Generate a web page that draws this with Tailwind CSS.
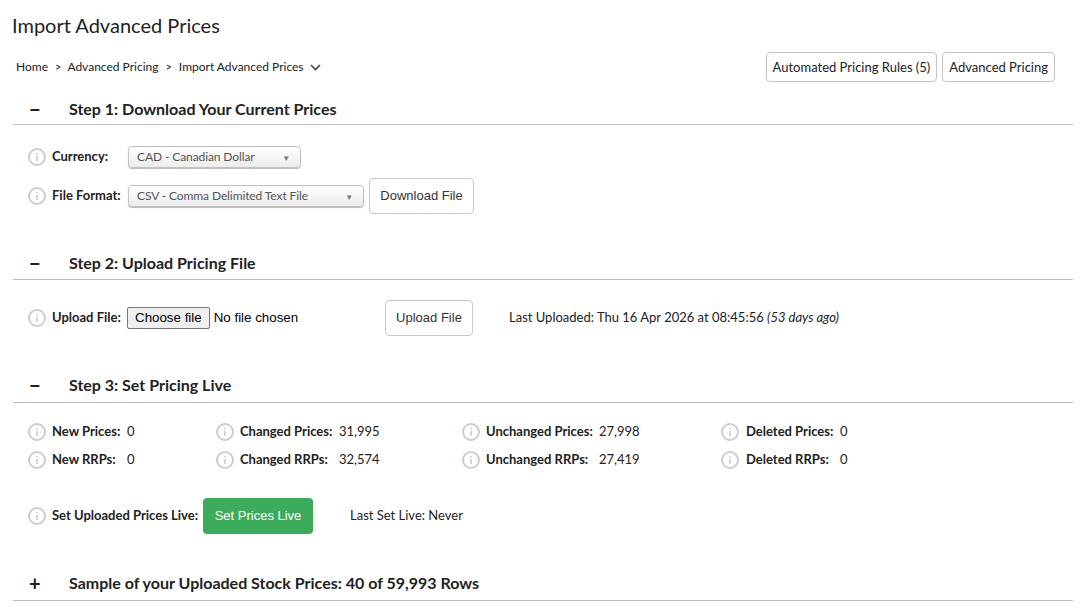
<!DOCTYPE html>
<html lang="en">
<head>
    <meta charset="UTF-8">
    <meta name="viewport" content="width=device-width, initial-scale=1.0">
    <title>Import Advanced Prices</title>
    <script src="https://cdn.jsdelivr.net/npm/@tailwindcss/browser@4"></script>
</head>
<body class="bg-white text-[#222] font-['Lato',sans-serif] text-[13px] overflow-hidden">
<div class="h-[615px] w-[1083px] pl-[13px] pr-[10px] overflow-hidden">

    <h1 class="pt-[12px] -ml-[1px] h-[52px] text-[20px] leading-[26px] text-[#222]">Import Advanced Prices</h1>

    <!-- breadcrumb and top buttons -->
    <div class="flex items-center justify-between h-[30px] pl-[3px] pr-[18px]">
        <div class="flex items-center text-[12px]">
            <span>Home</span>
            <span class="ml-[7px] mr-[6px] text-[11px]">&gt;</span>
            <span>Advanced Pricing</span>
            <span class="ml-[7px] mr-[7px] text-[11px]">&gt;</span>
            <span>Import Advanced Prices</span>
            <svg class="ml-[6px] mt-[1px]" width="11" height="7" viewBox="0 0 11 7" fill="none" stroke="#444" stroke-width="1.6"><path d="M1 1l4.5 4.5L10 1"/></svg>
        </div>
        <div class="flex gap-[5px]">
            <a class="flex items-center h-[30px] pt-[1px] px-[6px] border border-[#c4c4c4] rounded-[4px] text-[13px]">Automated Pricing Rules (5)</a>
            <a class="flex items-center h-[30px] pt-[1px] px-[6px] border border-[#c4c4c4] rounded-[4px] text-[13px]">Advanced Pricing</a>
        </div>
    </div>

    <!-- step 1 -->
    <div class="flex items-center h-[28px] mt-[13px] border-b border-[#bdbdbd] box-content pb-[1px]">
        <span class="w-[56px] pl-[16px] text-[20px] font-bold leading-none">−</span>
        <h2 class="text-[16px] font-bold">Step 1: Download Your Current Prices</h2>
    </div>
    <div class="flex items-center h-[22px] mt-[21px] pl-[15px]">
        <svg class="w-[18px] h-[18px] shrink-0" viewBox="0 0 18 18" fill="none"><circle cx="9" cy="9" r="8" stroke="#c9cdd6" stroke-width="2"/><path d="M9 8v5M9 5v1.4" stroke="#b5b9c2" stroke-width="1.2"/></svg>
        <label class="ml-[6px] w-[76px] font-bold">Currency:</label>
        <div class="relative w-[173px] h-[22px] flex items-center px-[8px] border border-[#c2c2c2] rounded-[4px] bg-gradient-to-b from-white to-[#ececec] shadow-[0_1px_1px_#bbb] text-[12px] tracking-[-0.1px] text-[#555]">CAD - Canadian Dollar<span class="absolute right-[10px] top-[5px] text-[8px] text-[#777]">▼</span></div>
    </div>
    <div class="flex items-center h-[36px] mt-[10px] pl-[15px]">
        <svg class="w-[18px] h-[18px] shrink-0" viewBox="0 0 18 18" fill="none"><circle cx="9" cy="9" r="8" stroke="#c9cdd6" stroke-width="2"/><path d="M9 8v5M9 5v1.4" stroke="#b5b9c2" stroke-width="1.2"/></svg>
        <label class="ml-[6px] w-[76px] font-bold">File Format:</label>
        <div class="relative w-[236px] h-[22px] flex items-center px-[8px] border border-[#c2c2c2] rounded-[4px] bg-gradient-to-b from-white to-[#ececec] shadow-[0_1px_1px_#bbb] text-[12px] tracking-[-0.1px] text-[#555]">CSV - Comma Delimited Text File<span class="absolute right-[10px] top-[5px] text-[8px] text-[#777]">▼</span></div>
        <button class="ml-[5px] w-[105px] h-[36px] border border-[#c8c8c8] rounded-[4px] bg-white font-['Liberation_Sans',sans-serif] text-[13px] text-[#333]">Download File</button>
    </div>

    <!-- step 2 -->
    <div class="flex items-center h-[28px] mt-[35px] border-b border-[#bdbdbd] box-content pb-[2px]">
        <span class="w-[56px] pl-[16px] text-[20px] font-bold leading-none">−</span>
        <h2 class="text-[16px] font-bold">Step 2: Upload Pricing File</h2>
    </div>
    <div class="flex items-center h-[36px] mt-[20px] pl-[15px]">
        <svg class="w-[18px] h-[18px] shrink-0" viewBox="0 0 18 18" fill="none"><circle cx="9" cy="9" r="8" stroke="#c9cdd6" stroke-width="2"/><path d="M9 8v5M9 5v1.4" stroke="#b5b9c2" stroke-width="1.2"/></svg>
        <label class="ml-[6px] w-[75px] font-bold">Upload File:</label>
        <div class="flex items-center w-[258px] font-['Liberation_Sans',sans-serif] text-[13.33px] text-black">
            <span class="flex items-center h-[22px] px-[7px] border border-[#767676] rounded-[2px] bg-[#efefef]">Choose file</span>
            <span class="ml-[4px]">No file chosen</span>
        </div>
        <button class="w-[88px] h-[36px] border border-[#c8c8c8] rounded-[4px] bg-white font-['Liberation_Sans',sans-serif] text-[13px] text-[#333]">Upload File</button>
        <p class="ml-[36px]">Last Uploaded: Thu 16 Apr 2026 at 08:45:56 <em>(53 days ago)</em></p>
    </div>

    <!-- step 3 -->
    <div class="flex items-center h-[28px] mt-[35px] border-b border-[#bdbdbd] box-content pb-[3px]">
        <span class="w-[56px] pl-[16px] text-[20px] font-bold leading-none">−</span>
        <h2 class="text-[16px] font-bold">Step 3: Set Pricing Live</h2>
    </div>
    <div class="grid grid-cols-[188px_246px_259px_1fr] auto-rows-[28px] items-center mt-[15px] pl-[15px]">
        <div class="flex items-center"><svg class="w-[18px] h-[18px] shrink-0" viewBox="0 0 18 18" fill="none"><circle cx="9" cy="9" r="8" stroke="#c9cdd6" stroke-width="2"/><path d="M9 8v5M9 5v1.4" stroke="#b5b9c2" stroke-width="1.2"/></svg><b class="ml-[6px] w-[75px]">New Prices:</b><span>0</span></div>
        <div class="flex items-center"><svg class="w-[18px] h-[18px] shrink-0" viewBox="0 0 18 18" fill="none"><circle cx="9" cy="9" r="8" stroke="#c9cdd6" stroke-width="2"/><path d="M9 8v5M9 5v1.4" stroke="#b5b9c2" stroke-width="1.2"/></svg><b class="ml-[6px] w-[99px]">Changed Prices:</b><span>31,995</span></div>
        <div class="flex items-center"><svg class="w-[18px] h-[18px] shrink-0" viewBox="0 0 18 18" fill="none"><circle cx="9" cy="9" r="8" stroke="#c9cdd6" stroke-width="2"/><path d="M9 8v5M9 5v1.4" stroke="#b5b9c2" stroke-width="1.2"/></svg><b class="ml-[6px] w-[113px]">Unchanged Prices:</b><span>27,998</span></div>
        <div class="flex items-center"><svg class="w-[18px] h-[18px] shrink-0" viewBox="0 0 18 18" fill="none"><circle cx="9" cy="9" r="8" stroke="#c9cdd6" stroke-width="2"/><path d="M9 8v5M9 5v1.4" stroke="#b5b9c2" stroke-width="1.2"/></svg><b class="ml-[7px] w-[94px]">Deleted Prices:</b><span>0</span></div>
        <div class="flex items-center"><svg class="w-[18px] h-[18px] shrink-0" viewBox="0 0 18 18" fill="none"><circle cx="9" cy="9" r="8" stroke="#c9cdd6" stroke-width="2"/><path d="M9 8v5M9 5v1.4" stroke="#b5b9c2" stroke-width="1.2"/></svg><b class="ml-[6px] w-[75px]">New RRPs:</b><span>0</span></div>
        <div class="flex items-center"><svg class="w-[18px] h-[18px] shrink-0" viewBox="0 0 18 18" fill="none"><circle cx="9" cy="9" r="8" stroke="#c9cdd6" stroke-width="2"/><path d="M9 8v5M9 5v1.4" stroke="#b5b9c2" stroke-width="1.2"/></svg><b class="ml-[6px] w-[99px]">Changed RRPs:</b><span>32,574</span></div>
        <div class="flex items-center"><svg class="w-[18px] h-[18px] shrink-0" viewBox="0 0 18 18" fill="none"><circle cx="9" cy="9" r="8" stroke="#c9cdd6" stroke-width="2"/><path d="M9 8v5M9 5v1.4" stroke="#b5b9c2" stroke-width="1.2"/></svg><b class="ml-[6px] w-[113px]">Unchanged RRPs:</b><span>27,419</span></div>
        <div class="flex items-center"><svg class="w-[18px] h-[18px] shrink-0" viewBox="0 0 18 18" fill="none"><circle cx="9" cy="9" r="8" stroke="#c9cdd6" stroke-width="2"/><path d="M9 8v5M9 5v1.4" stroke="#b5b9c2" stroke-width="1.2"/></svg><b class="ml-[7px] w-[94px]">Deleted RRPs:</b><span>0</span></div>
    </div>
    <div class="flex items-center h-[36px] mt-[24px] pl-[15px]">
        <svg class="w-[18px] h-[18px] shrink-0" viewBox="0 0 18 18" fill="none"><circle cx="9" cy="9" r="8" stroke="#c9cdd6" stroke-width="2"/><path d="M9 8v5M9 5v1.4" stroke="#b5b9c2" stroke-width="1.2"/></svg>
        <label class="ml-[6px] w-[151px] font-bold">Set Uploaded Prices Live:</label>
        <button class="w-[110px] h-[36px] rounded-[4px] bg-[#3dab5c] font-['Liberation_Sans',sans-serif] text-[13px] text-white">Set Prices Live</button>
        <p class="ml-[37px]">Last Set Live: Never</p>
    </div>

    <!-- sample -->
    <div class="flex items-center h-[28px] mt-[35px] border-b border-[#bdbdbd] box-content pb-[3px]">
        <span class="w-[56px] pl-[16px] text-[20px] font-bold leading-none">+</span>
        <h2 class="text-[16px] font-bold">Sample of your Uploaded Stock Prices: 40 of 59,993 Rows</h2>
    </div>
</div>
</body>
</html>
